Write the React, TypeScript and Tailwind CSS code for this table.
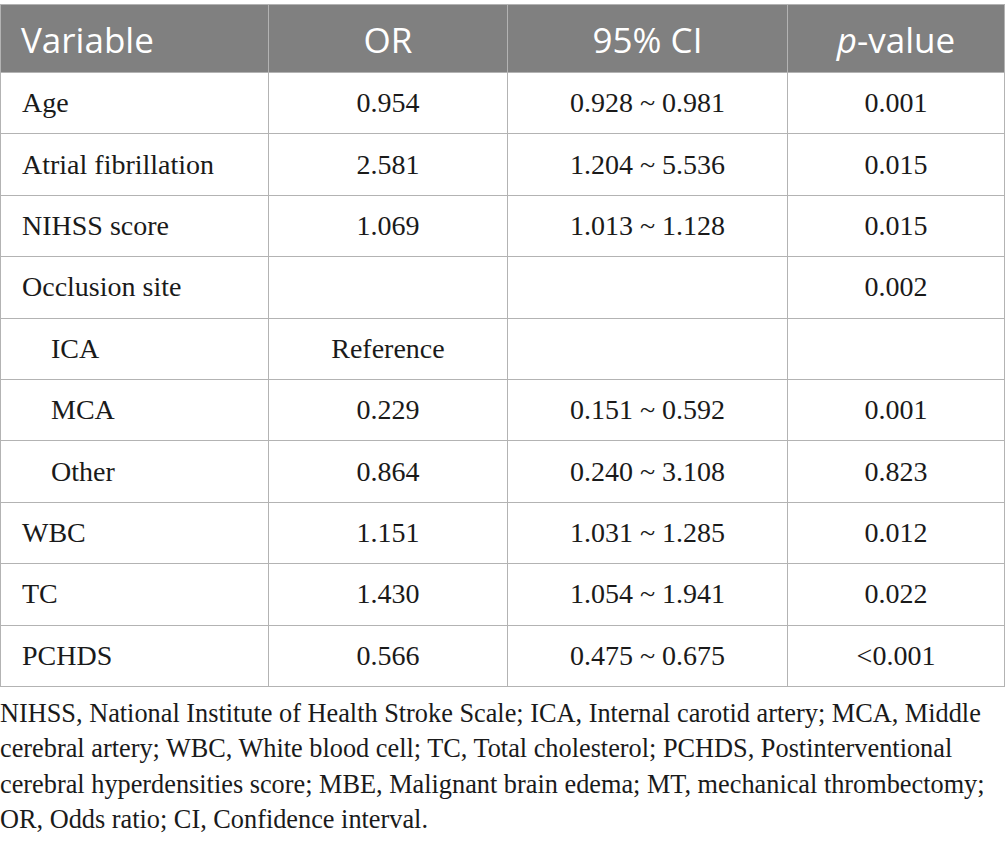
import React from "react";

type Row = { v: string; or: string; ci: string; p: string; indent?: boolean };

const rows: Row[] = [
  { v: "Age", or: "0.954", ci: "0.928 ~ 0.981", p: "0.001" },
  { v: "Atrial fibrillation", or: "2.581", ci: "1.204 ~ 5.536", p: "0.015" },
  { v: "NIHSS score", or: "1.069", ci: "1.013 ~ 1.128", p: "0.015" },
  { v: "Occlusion site", or: "", ci: "", p: "0.002" },
  { v: "ICA", or: "Reference", ci: "", p: "", indent: true },
  { v: "MCA", or: "0.229", ci: "0.151 ~ 0.592", p: "0.001", indent: true },
  { v: "Other", or: "0.864", ci: "0.240 ~ 3.108", p: "0.823", indent: true },
  { v: "WBC", or: "1.151", ci: "1.031 ~ 1.285", p: "0.012" },
  { v: "TC", or: "1.430", ci: "1.054 ~ 1.941", p: "0.022" },
  { v: "PCHDS", or: "0.566", ci: "0.475 ~ 0.675", p: "<0.001" },
];

export default function App() {
  return (
    <div className="w-[1005px] h-[851px] bg-white pt-[4px]">
      <table className="w-[1004px] border-collapse table-fixed text-[#1a1a1a]">
        <colgroup>
          <col className="w-[268px]" />
          <col className="w-[239px]" />
          <col className="w-[280px]" />
          <col className="w-[217px]" />
        </colgroup>
        <thead>
          <tr className="h-[68px] bg-[#808080] text-white text-[35px] leading-none font-['Open_Sans',sans-serif]">
            <th className="border border-[#b3b3b3] text-left pl-[20px] pt-[2px] font-normal">Variable</th>
            <th className="border border-[#b3b3b3] text-center pt-[2px] font-normal">OR</th>
            <th className="border border-[#b3b3b3] text-center pt-[2px] font-normal">95% CI</th>
            <th className="border border-[#b3b3b3] text-center pt-[2px] font-normal">
              <span className="italic">p</span>-value
            </th>
          </tr>
        </thead>
        <tbody className="font-['Liberation_Serif',serif] text-[28px]">
          {rows.map((r, i) => (
            <tr key={i} className="h-[61.4px]">
              <td className={`border border-[#b3b3b3] text-left ${r.indent ? "pl-[50px]" : "pl-[21px]"}`}>{r.v}</td>
              <td className="border border-[#b3b3b3] text-center">{r.or}</td>
              <td className="border border-[#b3b3b3] text-center">{r.ci}</td>
              <td className="border border-[#b3b3b3] text-center">{r.p}</td>
            </tr>
          ))}
        </tbody>
      </table>
      <p className="mt-[9px] font-['Liberation_Serif',serif] text-[26.3px] leading-[35.5px] text-[#1a1a1a] w-[1005px] whitespace-nowrap">
        NIHSS, National Institute of Health Stroke Scale; ICA, Internal carotid artery; MCA, Middle
        <br />
        cerebral artery; WBC, White blood cell; TC, Total cholesterol; PCHDS, Postinterventional
        <br />
        cerebral hyperdensities score; MBE, Malignant brain edema; MT, mechanical thrombectomy;
        <br />
        OR, Odds ratio; CI, Confidence interval.
      </p>
    </div>
  );
}
